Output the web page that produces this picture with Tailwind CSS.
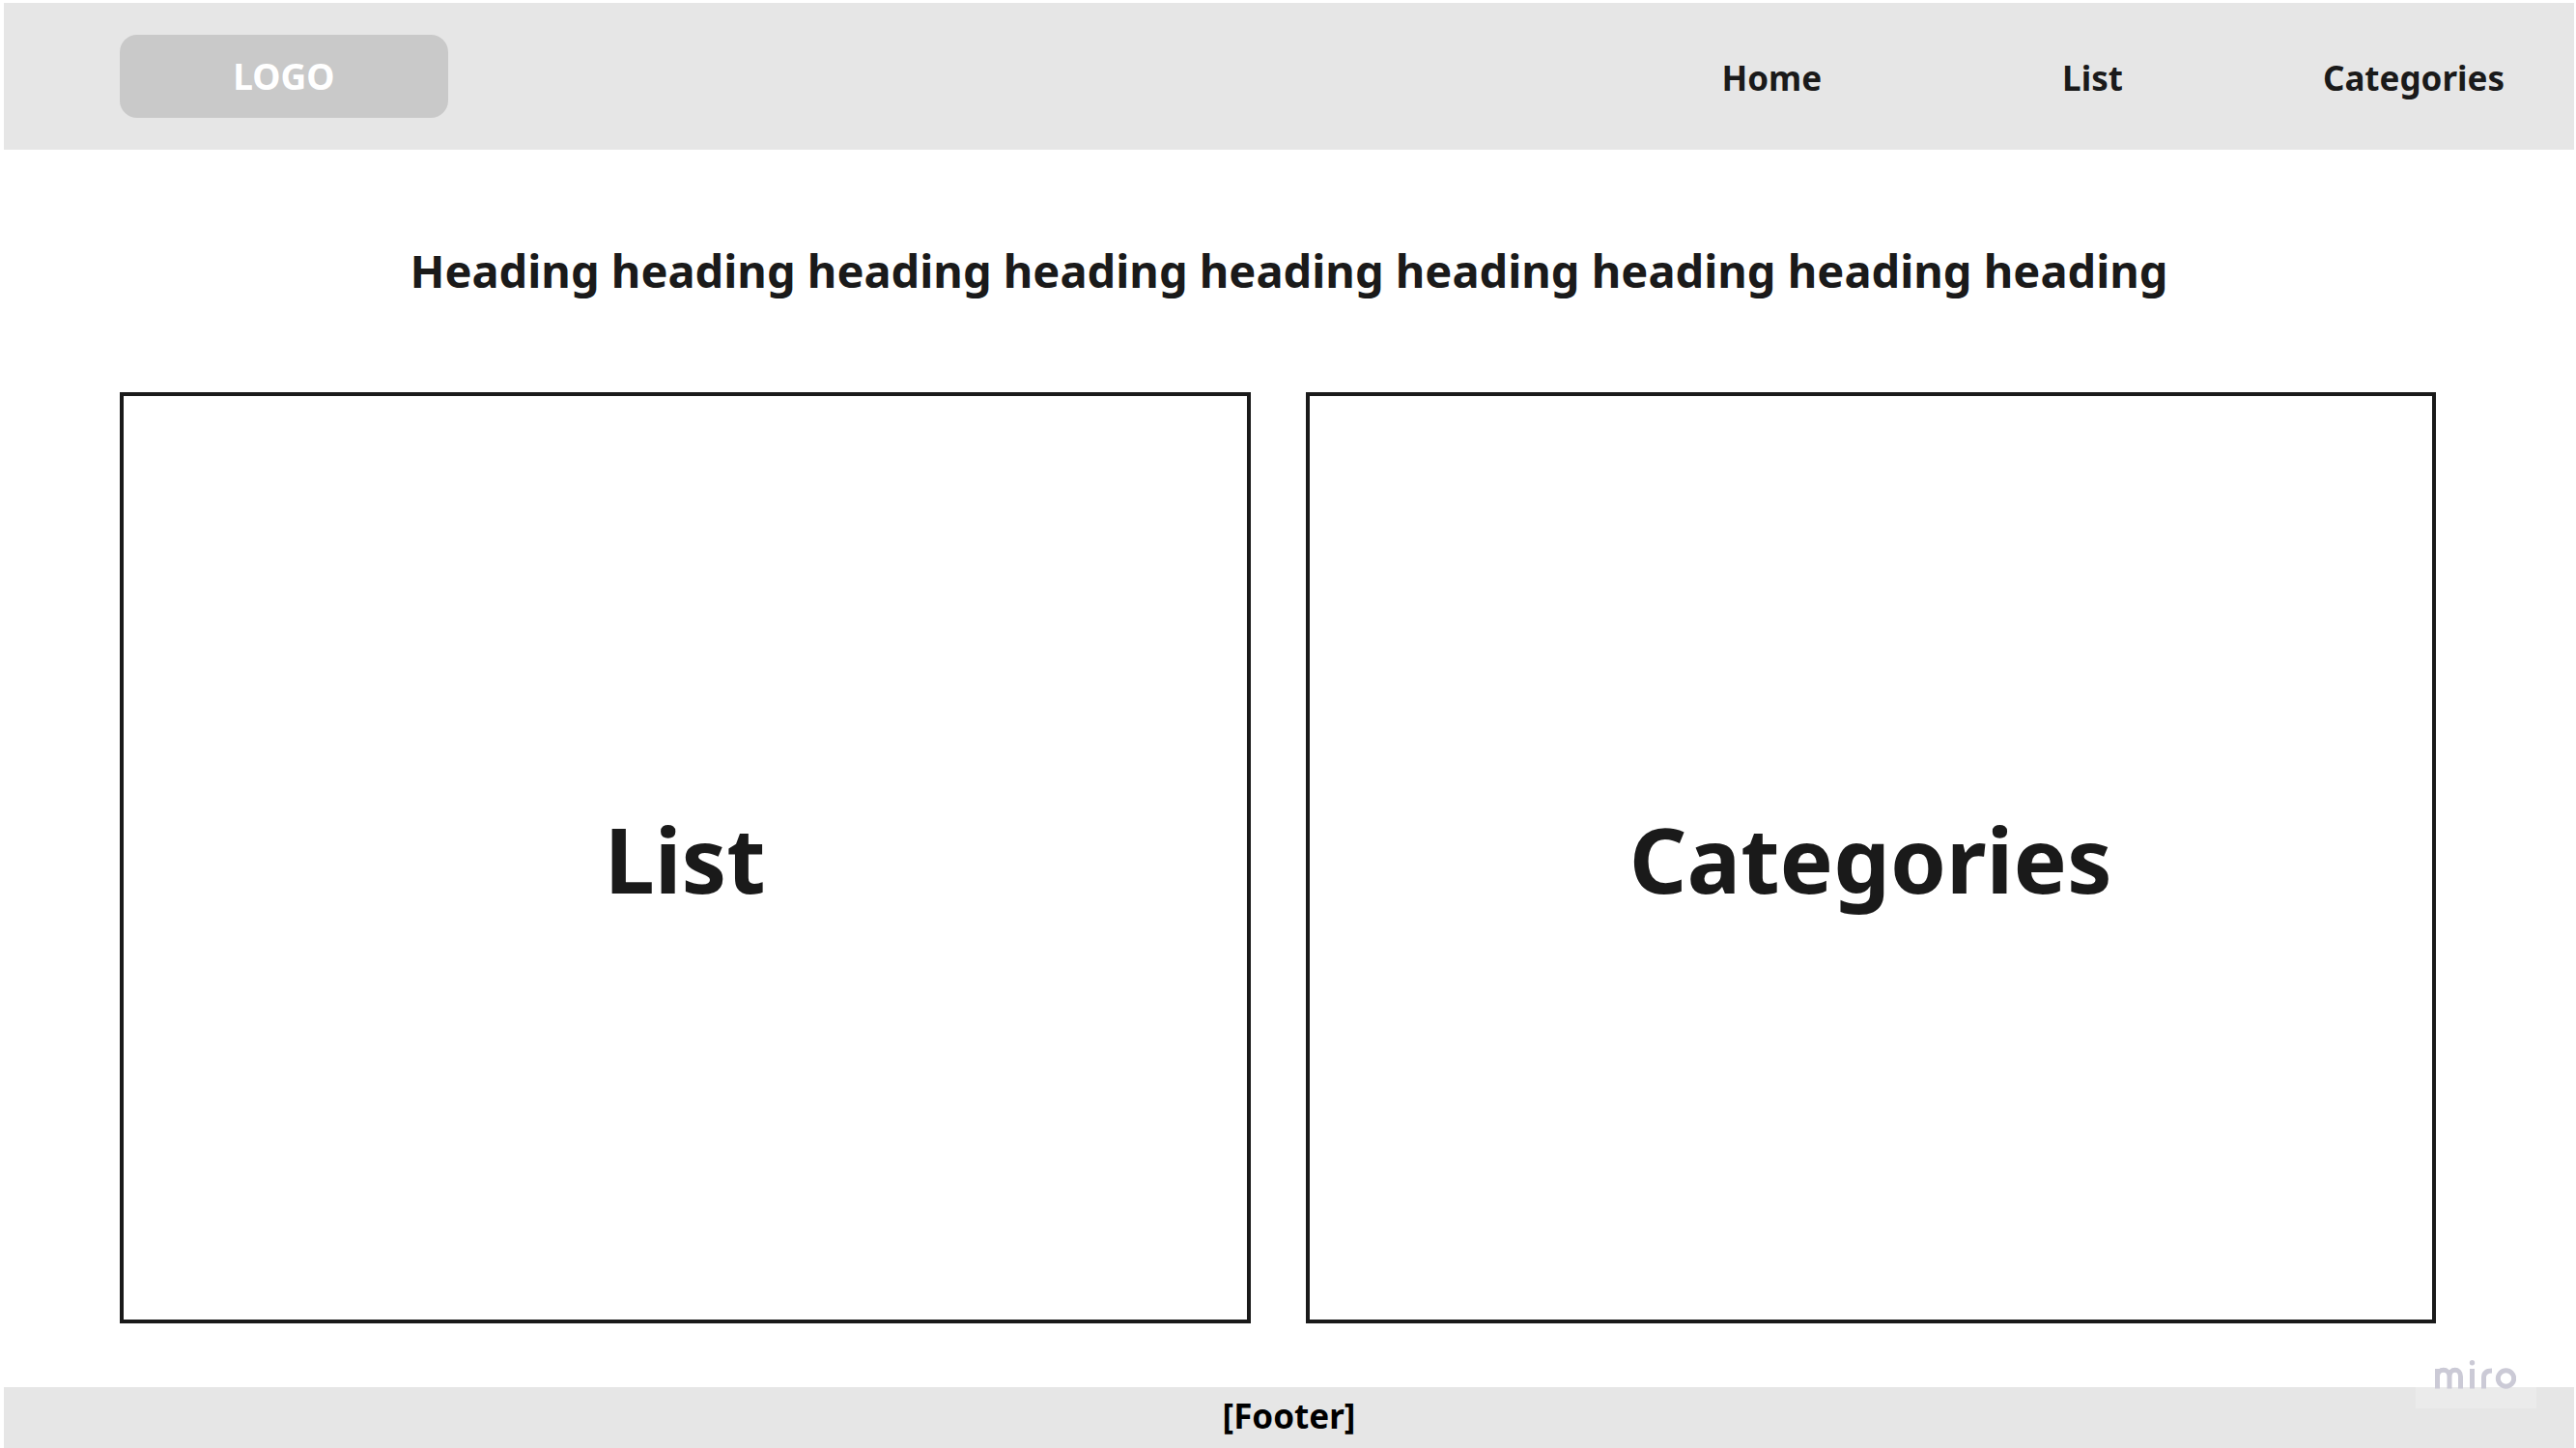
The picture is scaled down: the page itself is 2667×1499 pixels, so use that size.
<!DOCTYPE html>
<html lang="en">
<head>
<meta charset="utf-8">
<title>Home</title>
<script src="https://cdn.jsdelivr.net/npm/@tailwindcss/browser@4"></script>
</head>
<body class="flex min-h-screen flex-col bg-white pt-[3px] pr-[2px] pl-1 font-['Noto_Sans',sans-serif] font-bold text-[#1a1a1a]">
<header class="flex h-[152px] items-center justify-between bg-[#e6e6e6] pr-[72px] pl-[120px]">
<a href="#" class="flex h-[86px] w-[340px] items-center justify-center rounded-[18px] bg-[#c9c9c9] pb-px text-[37px] text-white">LOGO</a>
<nav class="flex pt-1 text-[35px]">
<a href="#" class="mr-[249px]">Home</a>
<a href="#" class="mr-[207px]">List</a>
<a href="#">Categories</a>
</nav>
</header>
<main class="flex flex-1 flex-col">
<h1 class="pt-[93px] text-center text-[47px] leading-[64px]">Heading heading heading heading heading heading heading heading heading</h1>
<div class="mt-[94px] mr-[143px] mb-[66px] ml-[120px] grid flex-1 grid-cols-2 gap-[57px]">
<a href="#" class="flex items-center justify-center border-4 border-[#1a1a1a] pt-[3px] text-[93px]">List</a>
<a href="#" class="flex items-center justify-center border-4 border-[#1a1a1a] pt-[3px] text-[93px]">Categories</a>
</div>
</main>
<footer class="relative flex h-[63px] items-center justify-center bg-[#e6e6e6] pb-[2px] text-[35px] text-black">
[Footer]
<div class="absolute -top-[41px] right-[39px] flex h-[63px] w-[125px] items-center justify-center bg-white/20 pr-[2px] pb-[7px]">
<svg class="h-[30px] w-[84px]" viewBox="0 0 84 30" fill="none" stroke="#cbcad6" stroke-width="5" role="img" aria-label="miro">
<path d="M2.5 29.500V9M2.5 17C2.5 8 15 8 15 17V29.500M15 17C15 8 26.500 8 26.500 17V29.500M38.500 29.500V9M50.500 29.500V18Q50.500 11 59 11"/>
<circle cx="73.500" cy="19" r="8.200"/>
<circle cx="38.500" cy="2.800" r="2.700" fill="#cbcad6" stroke="none"/>
</svg>
</div>
</footer>
</body>
</html>
